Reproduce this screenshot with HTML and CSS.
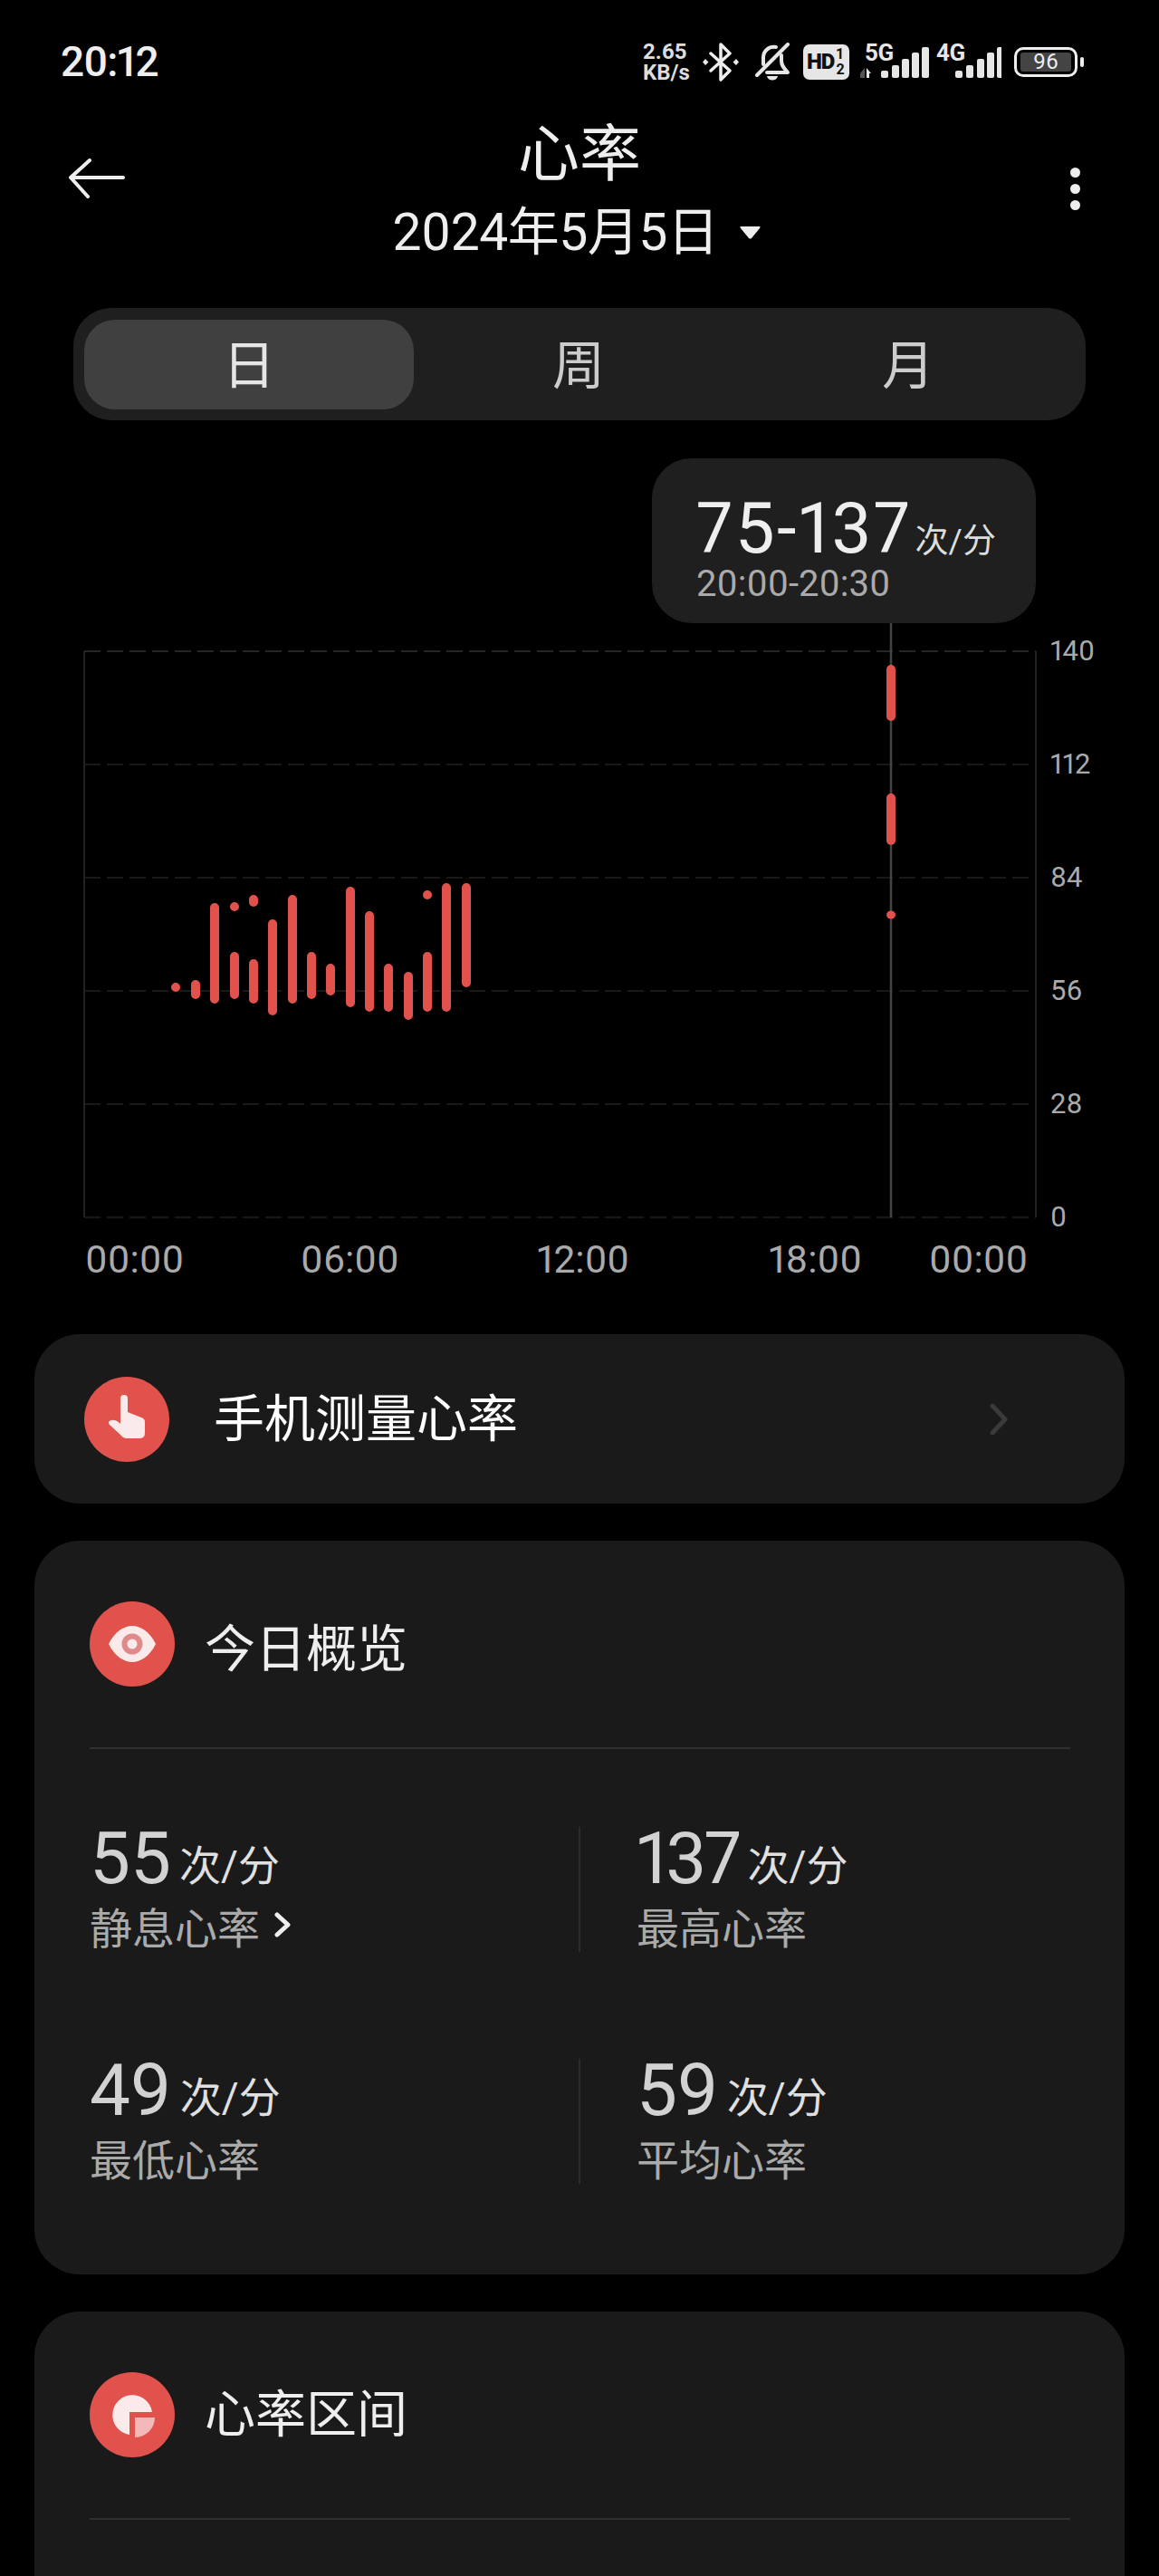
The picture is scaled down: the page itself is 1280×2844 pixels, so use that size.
FILE: index.html
```html
<!DOCTYPE html>
<html lang="zh-CN">
<head>
<meta charset="utf-8">
<title>心率</title>
<link rel="stylesheet" href="styles.css">
</head>
<body>
<div class="page">
  <div class="status">
    <span class="time">20:12</span>
    <div class="status-right">
      <div class="speed"><span>2.65</span><span>KB/s</span></div>
      <svg class="ic-bt" viewBox="0 0 40 43"><path class="st" d="M9 12 30 31 20 41V2L30 12 9 31"/><path class="fl" d="M3 18l3.500 3.500L3 25l-3-3.500zM37 18l3 3.500L37 25l-3.500-3.500z"/></svg>
      <svg class="ic-bell" viewBox="0 0 40 42"><path class="st3" d="M10 24V17C10 9 16 4 24 5M30 14V20C30 26 33 28 37 33H14"/><path class="st3" d="M37 2 3 36"/><path class="fl" d="M14 37H26C25 43 15 43 14 37Z"/></svg>
      <div class="hd"><span class="hd-t">HD</span><span class="hd-f"><span>1</span><span>2</span></span></div>
      <div class="net net-a"><span class="net-t">5G</span>
        <svg viewBox="0 0 78 42"><path class="arrow-dim" d="M0 34 5 28V39H0Z"/><path class="fl" d="M7 28l5 6H10V39H7Z"/><rect class="fl" x="23" y="31" width="8" height="8" rx="2"/><rect class="fl" x="35" y="25" width="8" height="14" rx="2"/><rect class="fl" x="46" y="18" width="8" height="21" rx="2"/><rect class="fl" x="57" y="11" width="8" height="28" rx="2"/><rect class="fl" x="68" y="5" width="8" height="34" rx="2"/></svg>
      </div>
      <div class="net net-b"><span class="net-t">4G</span>
        <svg viewBox="0 0 72 42"><rect class="fl" x="21" y="31" width="8" height="8" rx="2"/><rect class="fl" x="33" y="25" width="8" height="14" rx="2"/><rect class="fl" x="45" y="18" width="8" height="21" rx="2"/><rect class="fl" x="56" y="11" width="8" height="28" rx="2"/><rect class="fl" x="67" y="5" width="8" height="34" rx="2"/></svg>
      </div>
      <div class="battery"><div class="batt-body"><span class="batt-fill">96</span></div><div class="batt-cap"></div></div>
    </div>
  </div>

  <header class="header">
    <svg class="back" viewBox="0 0 62 44"><path d="M60 21H3M23 2 2 21 21 42"/></svg>
    <div class="head-center">
      <div class="title">心率</div>
      <div class="date"><span>2024年5月5日</span><svg class="caret" viewBox="0 0 23 14"><path d="M1 0H22Q23 0 22 2L13 13Q11.500 14 10 13L1 2Q0 0 1 0Z"/></svg></div>
    </div>
    <div class="menu"><i></i><i></i><i></i></div>
  </header>

  <nav class="seg">
    <div class="seg-item active">日</div>
    <div class="seg-item">周</div>
    <div class="seg-item">月</div>
  </nav>

  <section class="chart">
    <svg class="plot" viewBox="0 506 1280 967">
      <path class="frame" d="M93 719V1344M1144 719V1344"/>
      <path class="grid grid-top" d="M93 719H1144"/>
      <path class="grid" d="M93 844H1144M93 969H1144M93 1094H1144M93 1219H1144M93 1344H1144"/>
      <path class="cursor" d="M984 688V1344"/>
      <path class="bars" d="M194 1090V1090M216 1087V1098M237 1002V1103M259 1056V1098M259 1001V1001M280 1064V1103M280 993V996M301 1020V1116M323 993V1103M344 1056V1098M365 1069V1094M387 984V1107M408 1011V1112M429 1069V1112M451 1078V1121M472 1056V1112M472 988V988M493 980V1112M515 980V1085M984 739V791M984 881V928"/>
      <ellipse class="dot" cx="984" cy="1010" rx="5" ry="4.500"/>
      <text class="axis-y" x="1160" y="729">140</text>
      <text class="axis-y" x="1160" y="854">112</text>
      <text class="axis-y" x="1160" y="979">84</text>
      <text class="axis-y" x="1160" y="1104">56</text>
      <text class="axis-y" x="1160" y="1229">28</text>
      <text class="axis-y" x="1160" y="1354">0</text>
      <text class="axis-x" x="94" y="1405">00:00</text>
      <text class="axis-x" x="332" y="1405">06:00</text>
      <text class="axis-x" x="593" y="1405">12:00</text>
      <text class="axis-x" x="849" y="1405">18:00</text>
      <text class="axis-x" x="1026" y="1405">00:00</text>
    </svg>
    <div class="tip">
      <div class="tip-row"><span class="tip-range">75-137</span><span class="tip-unit">次/分</span></div>
      <div class="tip-time">20:00-20:30</div>
    </div>
  </section>

  <a class="card measure">
    <svg class="badge" viewBox="0 0 94 94"><circle class="badge-bg" cx="47" cy="47" r="47"/><path class="badge-fg" d="M40 24a4 4 0 0 1 8 0V39L63 45Q67 46 67 50V62Q67 68 61 68H47Q43 68 40 64L28 53Q25 49 30 48Q35 47 40 52Z"/></svg>
    <span class="measure-text">手机测量心率</span>
    <svg class="chev-dim" viewBox="0 0 20 34"><path d="M3 2 17 17 3 32"/></svg>
  </a>

  <section class="card panel overview">
    <div class="panel-head">
      <svg class="badge" viewBox="0 0 94 94"><circle class="badge-bg" cx="47" cy="47" r="47"/><path class="badge-fg" d="M21 47C28 33 38 27 47 27S66 33 73 47C66 61 56 67 47 67S28 61 21 47Z"/><circle class="eye-ring" cx="47" cy="47" r="8.500"/></svg>
      <h2 class="panel-title">今日概览</h2>
    </div>
    <div class="divider"></div>
    <div class="stats">
      <div class="stat">
        <div class="val"><span class="num">55</span><span class="unit">次/分</span></div>
        <div class="lab">静息心率<svg class="chev" viewBox="0 0 18 28"><path d="M3 3 15 14 3 25"/></svg></div>
      </div>
      <div class="stat right">
        <div class="val"><span class="num num-narrow">137</span><span class="unit">次/分</span></div>
        <div class="lab">最高心率</div>
      </div>
      <div class="stat">
        <div class="val"><span class="num">49</span><span class="unit">次/分</span></div>
        <div class="lab">最低心率</div>
      </div>
      <div class="stat right">
        <div class="val"><span class="num">59</span><span class="unit">次/分</span></div>
        <div class="lab">平均心率</div>
      </div>
    </div>
  </section>

  <section class="card panel zones">
    <div class="panel-head">
      <svg class="badge" viewBox="0 0 94 94"><circle class="badge-bg" cx="47" cy="47" r="47"/><path class="badge-fg" d="M44 44H69A22 22 0 1 0 44 69Z"/><path class="badge-pink" d="M50 50H72A22 22 0 0 1 50 72Z"/></svg>
      <h2 class="panel-title">心率区间</h2>
    </div>
    <div class="divider"></div>
  </section>
</div>
</body>
</html>
```

FILE: styles.css
```css
* { box-sizing: border-box; margin: 0; padding: 0; }
html, body { background: #000; }
body { font-family: Roboto, "Noto Sans CJK SC", sans-serif; color: #eee; font-variant-numeric: proportional-nums; }
.page { width: 1280px; height: 2844px; overflow: hidden; background: #000; }

/* status bar */
.status { height: 130px; padding: 6px 82px 0 67px; display: flex; align-items: center; justify-content: space-between; }
.time { font-size: 46px; line-height: 50px; font-weight: 500; color: #eee; letter-spacing: -1px; }
.status-right { display: flex; align-items: center; width: 488px; height: 46px; }
.speed { width: 53px; margin-top: 2px; display: flex; flex-direction: column; font-size: 24px; line-height: 23px; font-weight: 700; color: #ddd; white-space: nowrap; }
.st { fill: none; stroke: #eee; stroke-width: 3.500; stroke-linejoin: round; stroke-linecap: round; }
.st3 { fill: none; stroke: #e6e6e6; stroke-width: 4; stroke-linecap: round; stroke-linejoin: round; }
.fl { fill: #e6e6e6; }
.arrow-dim { fill: #555; }
.ic-bt { width: 40px; height: 43px; margin-left: 13px; }
.ic-bell { width: 40px; height: 42px; margin-left: 17px; }
.hd { width: 51px; height: 39px; margin-left: 14px; background: #e6e6e6; border-radius: 7px; display: flex; align-items: center; padding-left: 4px; color: #111; font-weight: 900; }
.hd-t { font-size: 24px; line-height: 24px; letter-spacing: -1px; }
.hd-f { display: flex; flex-direction: column; font-size: 16px; line-height: 17px; margin-left: 2px; font-weight: 700; }
.net { position: relative; height: 42px; flex: none; }
.net svg { display: block; width: 100%; height: 100%; }
.net-a { width: 78px; margin-left: 12px; }
.net-b { width: 72px; margin-left: 6px; }
.net-t { position: absolute; top: -2px; font-size: 26px; line-height: 26px; font-weight: 700; letter-spacing: -.5px; color: #e6e6e6; }
.net-a .net-t { left: 5px; }
.net-b .net-t { left: 0; }
.battery { display: flex; align-items: center; margin-left: 14px; flex: none; }
.batt-body { width: 70px; height: 33px; border: 3px solid #eee; border-radius: 10px; padding: 3px 4px; }
.batt-fill { display: block; height: 21px; border-radius: 3px; background: #444; color: #eee; text-align: center; font-size: 24px; line-height: 21px; }
.batt-cap { width: 4px; height: 11px; margin-left: 3px; background: #eee; border-radius: 2px; }

/* header */
.header { height: 210px; padding: 4px 76px 0; display: grid; grid-template-columns: 1fr auto 1fr; align-items: start; }
.back { width: 62px; height: 44px; margin-top: 41px; }
.back path { fill: none; stroke: #eee; stroke-width: 4; stroke-linecap: round; stroke-linejoin: round; }
.head-center { display: flex; flex-direction: column; align-items: center; }
.title { font-size: 68px; line-height: 74px; color: #eee; }
.date { display: flex; align-items: center; margin: 19px 0 0 -6px; font-size: 57px; line-height: 60px; color: #eee; letter-spacing: -.5px; white-space: nowrap; }
.caret { width: 23px; height: 14px; margin: 0 0 0 24px; fill: #eee; }
.menu { justify-self: end; margin-right: 11px; display: flex; flex-direction: column; gap: 7px; margin-top: 51px; }
.menu i { display: block; width: 11px; height: 11px; border-radius: 50%; background: #eee; }

/* segmented */
.seg { width: 1118px; height: 124px; margin-left: 81px; padding: 13px 14px 12px 12px; display: flex; background: #1f1f1f; border-radius: 42px; }
.seg-item { flex: 1; display: flex; align-items: center; justify-content: center; padding-top: 2px; font-size: 58px; line-height: 70px; color: #ccc; }
.seg-item.active { background: #404040; border-radius: 34px; color: #e6e6e6; }

/* chart */
.chart { position: relative; height: 967px; margin-top: 42px; }
.plot { display: block; width: 1280px; height: 967px; }
.frame { stroke: #222; stroke-width: 2; fill: none; }
.grid { stroke: #212121; stroke-width: 1.500; stroke-dasharray: 18 7; fill: none; }
.grid-top { stroke: #333; }
.cursor { stroke: #444; stroke-width: 2.500; fill: none; }
.bars { stroke: #e0524b; stroke-width: 10; stroke-linecap: round; fill: none; }
.dot { fill: #e0524b; }
.axis-y { font: 31px Roboto, sans-serif; fill: #aaa; font-variant-numeric: proportional-nums; }
.axis-x { font: 42.500px Roboto, sans-serif; fill: #aaa; font-variant-numeric: proportional-nums; }
.tip { position: absolute; left: 720px; top: 0; width: 424px; height: 182px; padding: 39px 0 0 49px; background: #1f1f1f; border-radius: 44px; }
.tip-row { display: flex; align-items: baseline; height: 77px; }
.tip-range { font-size: 78px; line-height: 77px; color: #eee; letter-spacing: 2.500px; }
.tip-unit { font-size: 37px; line-height: 40px; margin-left: 3px; color: #ddd; white-space: nowrap; }
.tip-time { font-size: 40px; line-height: 46px; color: #aaa; }

/* cards */
.card { display: block; width: 1204px; margin-left: 38px; background: #1a1a1a; border-radius: 50px; }
.measure { height: 187px; display: flex; align-items: center; padding-left: 55px; }
.badge { width: 94px; height: 94px; flex: none; }
.badge-bg { fill: #e0524b; }
.badge-fg { fill: #fbeaea; }
.badge-pink { fill: #f3b9b8; }
.eye-ring { fill: #fbeaea; stroke: #e0898a; stroke-width: 6; }
.measure-text { margin-left: 49px; font-size: 56px; line-height: 60px; color: #fff; }
.chev-dim { width: 20px; height: 34px; margin-left: auto; margin-right: 129px; }
.chev-dim path { fill: none; stroke: #3a3a3a; stroke-width: 5; stroke-linecap: round; stroke-linejoin: round; }

.panel { margin-top: 41px; padding: 0 60px 0 61px; }
.overview { height: 810px; }
.zones { height: 400px; }
.panel-head { height: 228px; padding-top: 67px; display: flex; align-items: flex-start; }
.panel-title { margin: 0 0 0 33px; font-size: 56px; line-height: 94px; font-weight: 400; color: #eee; }
.overview .panel-title { margin-top: 6px; }
.divider { height: 2px; background: #303030; }
.stats { display: grid; grid-template-columns: 540px 1fr; grid-auto-rows: 138px; row-gap: 118px; padding-top: 86px; }
.stat.right { border-left: 2px solid #2c2c2c; padding-left: 62px; }
.val { display: flex; align-items: flex-end; height: 70px; }
.num { font-size: 80px; line-height: 70px; color: #d2d2d2; }
.num-narrow { letter-spacing: -2.500px; }
.unit { font-size: 46px; line-height: 54px; color: #e0e0e0; margin-left: 9px; white-space: nowrap; }
.lab { display: flex; align-items: center; margin-top: 13px; font-size: 47px; line-height: 60px; color: #aaa; }
.chev { width: 18px; height: 28px; margin-left: 16px; margin-top: -10px; }
.chev path { fill: none; stroke: #eee; stroke-width: 5; stroke-linecap: round; stroke-linejoin: round; }
```
